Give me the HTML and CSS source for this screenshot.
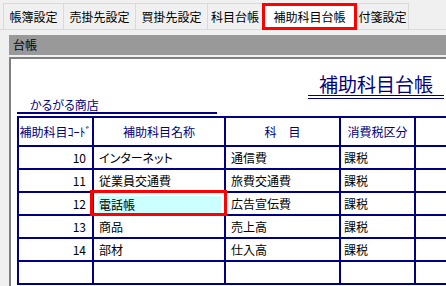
FILE: index.html
```html
<!DOCTYPE html>
<html lang="ja">

<head>
    <meta charset="UTF-8">
    <title>補助科目台帳</title>
    <link rel="stylesheet" href="styles.css">
</head>

<body>
    <div class="tabs">
        <div class="tab tab-books">帳簿設定</div>
        <div class="tab tab-sales">売掛先設定</div>
        <div class="tab tab-buy">買掛先設定</div>
        <div class="tab tab-acct">科目台帳</div>
        <div class="tab tab-sub active">補助科目台帳</div>
        <div class="tab tab-memo">付箋設定</div>
    </div>

    <div class="panel">
        <div class="panel-title">台帳</div>
        <div class="panel-body">
            <div class="report-head">
                <div class="company">かるがる商店</div>
                <div class="report-title">補助科目台帳</div>
            </div>

            <table class="ledger">
                <colgroup>
                    <col class="c-code">
                    <col class="c-name">
                    <col class="c-acct">
                    <col class="c-tax">
                    <col class="c-extra">
                </colgroup>
                <tr>
                    <th>補助科目ｺｰﾄﾞ</th>
                    <th>補助科目名称</th>
                    <th>科　目</th>
                    <th>消費税区分</th>
                    <th></th>
                </tr>
                <tr>
                    <td class="num">10</td>
                    <td class="name">インターネット</td>
                    <td class="acct">通信費</td>
                    <td class="tax">課税</td>
                    <td></td>
                </tr>
                <tr>
                    <td class="num">11</td>
                    <td class="name">従業員交通費</td>
                    <td class="acct">旅費交通費</td>
                    <td class="tax">課税</td>
                    <td></td>
                </tr>
                <tr>
                    <td class="num">12</td>
                    <td class="name selected"><div class="field">電話帳</div></td>
                    <td class="acct">広告宣伝費</td>
                    <td class="tax">課税</td>
                    <td></td>
                </tr>
                <tr>
                    <td class="num">13</td>
                    <td class="name">商品</td>
                    <td class="acct">売上高</td>
                    <td class="tax">課税</td>
                    <td></td>
                </tr>
                <tr>
                    <td class="num">14</td>
                    <td class="name">部材</td>
                    <td class="acct">仕入高</td>
                    <td class="tax">課税</td>
                    <td></td>
                </tr>
                <tr>
                    <td></td>
                    <td></td>
                    <td></td>
                    <td></td>
                    <td></td>
                </tr>
            </table>
        </div>
    </div>
</body>

</html>
```

FILE: styles.css
```css
body {
    margin: 0;
    width: 446px;
    height: 286px;
    overflow: hidden;
    background-color: #f0f0f0;
    font-family: "Noto Sans CJK JP", sans-serif;
    font-size: 12px;
    color: #000;
}

/* tab strip */
.tabs {
    display: flex;
    height: 26px;
    padding: 3px 0 0 3px;
    border-bottom: 1px solid #d9d9d9;
}

.tab {
    box-sizing: border-box;
    height: 26px;
    line-height: 25px;
    text-align: center;
    border: 1px solid #d9d9d9;
    border-bottom: none;
    margin-right: -1px;
}

.tab-books { width: 61px; }
.tab-sales { width: 73px; }
.tab-buy { width: 73px; }
.tab-acct { width: 56px; }
.tab-sub { width: 95px; }
.tab-memo { width: 53px; }

.tab.active {
    position: relative;
    z-index: 1;
    height: 27px;
    line-height: 21px;
    background-color: #fff;
    border: 3px solid #f00;
}

/* ledger panel */
.panel {
    margin: 5px 0 0 9px;
}

.panel-title {
    height: 20px;
    line-height: 20px;
    padding-left: 4px;
    margin-bottom: 2px;
    background-color: #999;
}

.panel-body {
    height: 240px;
    padding-left: 6px;
    background-color: #fff;
    border-top: 2px solid #808080;
    border-left: 2px solid #808080;
    overflow: hidden;
}

.report-head {
    display: flex;
    justify-content: space-between;
    height: 57px;
    padding-right: 2px;
    color: #000080;
}

.company {
    align-self: flex-end;
    width: 187px;
    padding-left: 13px;
    line-height: 15px;
    margin-bottom: 2px;
    border-bottom: 2px solid #000080;
    font-feature-settings: "palt";
}

.report-title {
    width: 136px;
    margin-top: 14px;
    height: 22px;
    line-height: 22px;
    font-size: 19px;
    text-align: center;
    border-bottom: 4px double #000080;
}

/* table */
.ledger {
    border-collapse: collapse;
    table-layout: fixed;
    width: 472px;
}

.c-code { width: 75px; }
.c-name { width: 132px; }
.c-acct { width: 115px; }
.c-tax { width: 75px; }
.c-extra { width: 75px; }

.ledger th,
.ledger td {
    border: 2px solid #000080;
    padding: 0;
    height: 21px;
    white-space: nowrap;
    overflow: hidden;
}

.ledger th {
    height: 27px;
    font-weight: normal;
    color: #000080;
    text-align: center;
}

.ledger .num {
    text-align: right;
    padding-right: 6px;
}

.ledger .name,
.ledger .acct {
    padding-left: 5px;
}

.ledger .name {
    font-feature-settings: "palt";
}

.ledger .tax {
    padding-left: 3px;
}

.ledger .selected {
    position: relative;
    padding: 0;
    overflow: visible;
}

.ledger .selected::after {
    content: "";
    position: absolute;
    top: -3px;
    bottom: -2px;
    left: -4px;
    right: -3px;
    border: 3px solid #f00;
}

.field {
    height: 17px;
    line-height: 17px;
    margin: 2px 3px 0 4px;
    padding-left: 1px;
    background-color: #ccffff;
}
```
